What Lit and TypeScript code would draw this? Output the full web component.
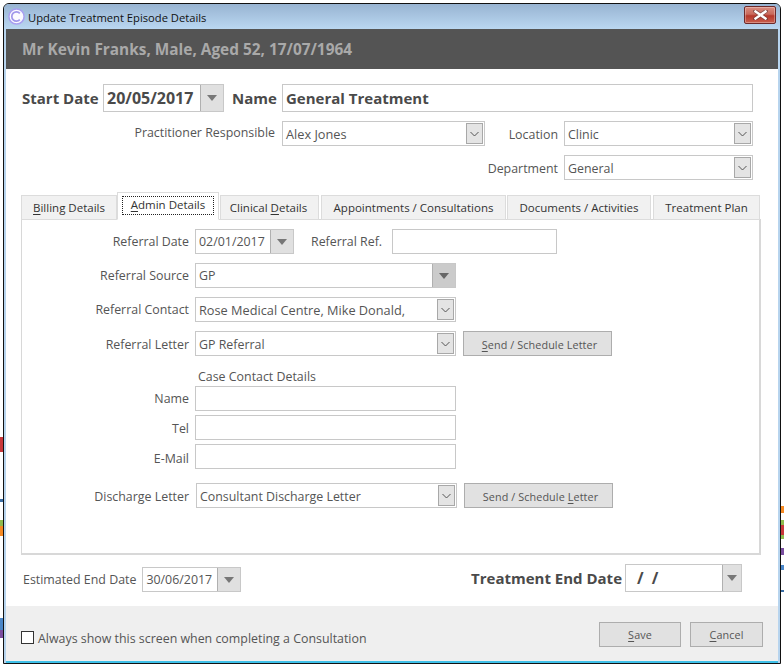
import { LitElement, html, css } from "lit";
import { customElement } from "lit/decorators.js";

const stripes = [
  ["l", 437, 15, "#c8373a"], ["l", 499, 3, "#3a6ea5"], ["l", 520, 6, "#8fbb4e"], ["l", 526, 10, "#f58a24"],
  ["l", 618, 12, "#4a86c8"], ["l", 630, 8, "#7a4ea0"],
  ["r", 506, 7, "#f58a24"], ["r", 520, 5, "#8fbb4e"], ["r", 525, 10, "#c8373a"], ["r", 535, 4, "#8fbb4e"],
  ["r", 548, 7, "#7a4ea0"], ["r", 565, 5, "#4a86c8"], ["r", 590, 2, "#3a6ea5"],
] as const;

@customElement("app-root")
export class AppRoot extends LitElement {
  static styles = css`
    :host { display: block; position: relative; width: 784px; height: 668px; background: #fff; overflow: hidden;
      font-family: "Open Sans", "Noto Sans", sans-serif; font-size: 12.4px; color: #555; }
    * { box-sizing: border-box; }
    .stripe { position: absolute; width: 3px; }
    .stripe.l { left: 0; }
    .stripe.r { right: 0; }
    .win { position: absolute; left: 3px; top: 3px; width: 778px; height: 661px; border: 1px solid #111; border-radius: 6px 6px 0 0;
      background: #b7d4ee; display: flex; flex-direction: column; overflow: hidden; }
    .title { height: 25px; flex: none; display: flex; align-items: center; padding-left: 4px; gap: 3px; color: #111;
      background: linear-gradient(#98b4d2, #bad7f1); }
    .title span { font-size: 11.2px; padding-top: 1px; }
    .close { margin-left: auto; margin-right: 4px; width: 32px; height: 18px; margin-top: -4px; border: 1px solid #6d2a2a; border-radius: 2px;
      background: linear-gradient(#d98c80 0%, #c96a5c 45%, #b5392c 55%, #c9604f 100%); display: flex; align-items: center; justify-content: center; box-shadow: inset 0 0 0 1px rgba(255,255,255,.3); }
    .inner { flex: 1; margin: 0 2px 2px; background: #fff; display: flex; flex-direction: column; min-height: 0; box-shadow: 0 2px 0 #3fc0e8; }
    .head { height: 40px; flex: none; background: #545454; color: #a9a9a9; font-weight: 700; font-size: 15.4px; display: flex; align-items: center; padding-left: 16px; }
    .form { padding: 14px 0 0 16px; }
    .row { display: flex; align-items: center; }
    .lab { text-align: right; white-space: nowrap; flex: none; }
    .b { font-weight: 700; font-size: 15px; color: #4a4a4a; }
    .box { flex: none; height: 25px; border: 1px solid #c8c8c8; background: #fff; display: flex; align-items: center; padding-left: 3px; color: #555; white-space: nowrap; overflow: hidden; }
    .box > span { flex: 1; }
    .val { padding-top: 1px; }
    .wide { font-size: 12.75px; }
    .tall { height: 28px; }
    .btnseg { align-self: stretch; flex: none; width: 24px; margin: -1px -1px -1px 0; background: #e0e0e0; border: 1px solid #b0b0b0; display: flex; align-items: center; justify-content: center; }
    .btnseg.dark { background: #cbcbcb; }
    .chev { flex: none; width: 17px; height: 21px; margin-right: 1px; background: #e4e4e4; border: 1px solid #a8a8a8; display: flex; align-items: center; justify-content: center; }
    .big { font-weight: 700; font-size: 15px; color: #4a4a4a; }
    .start { font-weight: 700; font-size: 16px; color: #4a4a4a; }
    .l1 { width: 81px; text-align: left; }
    .d1 { width: 121px; }
    .l2 { width: 50px; margin-left: 8px; text-align: left; }
    .i1 { width: 471px; margin-top: 1px; }
    .r2 { margin-top: 9px; }
    .l3 { width: 253px; margin-right: 7px; margin-top: -2px; }
    .c1 { width: 203px; }
    .l4 { width: 73px; margin-right: 6px; padding-top: 1px; }
    .c2 { width: 189px; }
    .l5 { width: 536px; margin-right: 6px; padding-top: 1px; }
    .tabs { display: flex; align-items: flex-end; height: 28px; margin: 12px 0 0 15px; position: relative; z-index: 1; font-size: 11.5px; }
    .tab { flex: none; height: 25px; padding-bottom: 1px; background: #f1f1f1; border: 1px solid #dcdcdc; display: flex; align-items: center; justify-content: center; color: #333; white-space: nowrap; }
    .tab.a { height: 28px; background: #fff; border-bottom-color: #fff; color: #333; align-items: flex-start; padding: 3px 0 0; }
    .tab.a span { border: 1px dotted #222; padding: 0 5px; width: 92px; height: 19px; line-height: 15px; text-align: center; }
    .t1 { width: 96px; } .t2 { width: 102px; } .t3 { width: 99px; margin-left: 1px; padding-right: 2px; } .t4 { width: 185px; margin-left: 2px; }
    .t5 { width: 144px; margin-left: 1px; } .t6 { width: 107px; margin-left: 2px; }
    .panel { margin: -1px 0 0 15px; width: 740px; height: 336px; border: 1px solid #d8d8d8; border-right-width: 2px; border-bottom-width: 2px; padding-top: 9px; }
    .fr { margin-top: 9px; }
    .fr.first { margin-top: 0; }
    .fl { width: 167px; margin-right: 6px; }
    .fl.down { padding-top: 1px; }
    .d2 { width: 99px; }
    .rr { width: 72px; margin: 0 9px 0 17px; text-align: left; }
    .i2 { width: 165px; }
    .w261 { width: 261px; }
    .send { flex: none; width: 149px; height: 25px; margin-left: 7px; background: #e1e1e1; border: 1px solid #adadad; display: flex; align-items: center; justify-content: center; color: #555; font-size: 10.8px; letter-spacing: 0.1px; padding: 1px 0 0 4px; }
    .case { margin: 12px 0 0 176px; height: 18px; line-height: 17px; }
    .cr { margin-top: 4px; }
    .cr.first { margin-top: 0; }
    .fl.t1off { padding-top: 2px; }
    .fl.t2off { padding-top: 3px; }
    .dis { margin-top: 14px; }
    .dis .box { margin-left: 1px; }
    .ends { display: flex; align-items: flex-end; justify-content: space-between; margin-top: 9px; padding: 0 36px 0 17px; }
    .group { display: flex; align-items: center; }
    .el { margin-right: 6px; }
    .tl { margin-right: 3px; }
    .d3 { width: 117px; }
    .d3 .btnseg { width: 20px; }
    .slashes { padding-left: 8px; font-weight: 700; font-size: 16px; color: #4a4a4a; word-spacing: 4px; }
    .foot { margin-top: auto; height: 55px; flex: none; background: #efefef; display: flex; align-items: flex-start; padding: 16px 15px 0; }
    .check { flex: none; width: 13px; height: 13px; border: 1px solid #333; background: #fff; margin: 9px 4px 0 0; }
    .ct { margin-top: 8px; flex: 1; }
    .fb { flex: none; height: 25px; background: #e1e1e1; border: 1px solid #adadad; display: flex; align-items: center; justify-content: center; color: #555; font-size: 10.8px; letter-spacing: 0.1px; }
    .save { width: 82px; }
    .cancel { width: 73px; margin-left: 9px; }
    u { text-underline-offset: 2px; }
  `;

  private tri(color = "#777") {
    return html`<svg width="10" height="6" viewBox="0 0 10 6"><path d="M0 0H10L5 6Z" fill=${color} /></svg>`;
  }

  private chev() {
    return html`<div class="chev"><svg width="9" height="6" viewBox="0 0 9 6"><path d="M.5 1 4.5 5 8.5 1" fill="none" stroke="#555" stroke-width="1" /></svg></div>`;
  }

  private combo(value: string, cls: string, textCls = "val") {
    return html`<div class="box ${cls}"><span class=${textCls}>${value}</span>${this.chev()}</div>`;
  }

  private date(value: unknown, cls: string) {
    return html`<div class="box ${cls}"><span>${value}</span><div class="btnseg">${this.tri()}</div></div>`;
  }

  render() {
    return html`
      ${stripes.map(
        ([side, top, h, color]) => html`<div class="stripe ${side}" style="top:${top}px;height:${h}px;background:${color}"></div>`
      )}
      <div class="win">
        <div class="title">
          <svg width="17" height="17" viewBox="0 0 17 17">
            <circle cx="8.5" cy="8.5" r="7.6" fill="#fbfaff" stroke="#a9a0f0" stroke-width="1.5" />
            <path d="M11.8 5.4A4.6 4.6 0 1 0 11.8 11.6" fill="none" stroke="#a097ea" stroke-width="1.7" />
          </svg>
          <span>Update Treatment Episode Details</span>
          <div class="close">
            <svg width="15" height="10" viewBox="0 0 15 10">
              <path d="M2 1 13 9M13 1 2 9" stroke="#5a3a3a" stroke-width="4" stroke-linecap="square" opacity=".55" />
              <path d="M2.5 1.5 12.5 8.5M12.5 1.5 2.5 8.5" stroke="#fff" stroke-width="2.4" stroke-linecap="square" />
            </svg>
          </div>
        </div>
        <div class="inner">
          <div class="head">Mr Kevin Franks, Male, Aged 52, 17/07/1964</div>
          <div class="form">
            <div class="row">
              <div class="lab b l1">Start Date</div>
              ${this.date(html`<span class="start">20/05/2017</span>`, "tall d1")}
              <div class="lab b l2">Name</div>
              <div class="box tall i1"><span class="big">General Treatment</span></div>
            </div>
            <div class="row r2">
              <div class="lab l3">Practitioner Responsible</div>
              ${this.combo("Alex Jones", "c1", "val wide")}
              <div class="lab l4">Location</div>
              ${this.combo("Clinic", "c2")}
            </div>
            <div class="row r2">
              <div class="lab l5">Department</div>
              ${this.combo("General", "c2")}
            </div>
          </div>
          <div class="tabs">
            <div class="tab t1"><span><u>B</u>illing Details</span></div>
            <div class="tab a t2"><span><u>A</u>dmin Details</span></div>
            <div class="tab t3"><span>Clinical <u>D</u>etails</span></div>
            <div class="tab t4"><span>Appointments / Consultations</span></div>
            <div class="tab t5"><span>Documents / Activities</span></div>
            <div class="tab t6"><span>Treatment Plan</span></div>
          </div>
          <div class="panel">
            <div class="row fr first">
              <div class="lab fl">Referral Date</div>
              ${this.date("02/01/2017", "d2")}
              <div class="lab rr">Referral Ref.</div>
              <div class="box i2"></div>
            </div>
            <div class="row fr">
              <div class="lab fl">Referral Source</div>
              <div class="box w261"><span>GP</span><div class="btnseg dark">${this.tri("#666")}</div></div>
            </div>
            <div class="row fr">
              <div class="lab fl">Referral Contact</div>
              ${this.combo("Rose Medical Centre, Mike Donald,", "w261", "val wide")}
            </div>
            <div class="row fr">
              <div class="lab fl down">Referral Letter</div>
              ${this.combo("GP Referral", "w261")}
              <div class="send"><span><u>S</u>end / Schedule Letter</span></div>
            </div>
            <div class="case">Case Contact Details</div>
            <div class="row cr first"><div class="lab fl">Name</div><div class="box w261"></div></div>
            <div class="row cr"><div class="lab fl t1off">Tel</div><div class="box w261"></div></div>
            <div class="row cr"><div class="lab fl t2off">E-Mail</div><div class="box w261"></div></div>
            <div class="row dis">
              <div class="lab fl down">Discharge Letter</div>
              ${this.combo("Consultant Discharge Letter", "w261")}
              <div class="send"><span>Send / Schedule <u>L</u>etter</span></div>
            </div>
          </div>
          <div class="ends">
            <div class="group">
              <div class="lab el">Estimated End Date</div>
              ${this.date("30/06/2017", "d2")}
            </div>
            <div class="group">
              <div class="lab b tl">Treatment End Date</div>
              ${this.date(html`<span class="slashes">/ /</span>`, "tall d3")}
            </div>
          </div>
          <div class="foot">
            <div class="check"></div>
            <div class="ct">Always show this screen when completing a Consultation</div>
            <div class="fb save"><span><u>S</u>ave</span></div>
            <div class="fb cancel"><span><u>C</u>ancel</span></div>
          </div>
        </div>
      </div>
    `;
  }
}
